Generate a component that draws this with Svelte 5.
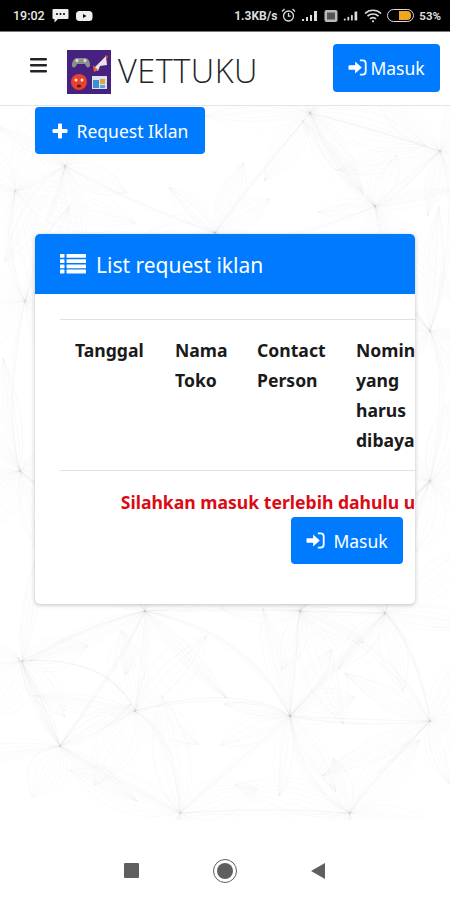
<script>
  // faint veined wallpaper behind the page: star-shaped hubs with bundles of thin spindles
  const hubs = [[15,190],[65,165],[215,232],[310,112],[375,205],[440,150],[25,300],[430,330],[20,470],[430,480],[22,660],[135,710],[60,745],[180,812],[290,715],[350,812],[385,612],[145,610],[300,610],[430,720]]
  let seed = 11
  const rnd = () => { seed = (seed * 16807) % 2147483647; return seed / 2147483647 }
  const veins = []
  for (const [hx, hy] of hubs) {
    const rays = 5 + Math.floor(rnd() * 3)
    const start = rnd() * 6.28
    for (let r = 0; r < rays; r++) {
      const ang = start + (r / rays) * 6.28 + (rnd() - .5) * .5
      const len = 55 + rnd() * 75
      const tx = hx + Math.cos(ang) * len, ty = hy + Math.sin(ang) * len
      const nx = -Math.sin(ang), ny = Math.cos(ang)
      const width = 12 + rnd() * 22
      for (let k = 0; k < 9; k++) {
        const b = ((k / 8) - .5) * 2 * width + (rnd() - .5) * 4
        const b2 = b * (.4 + rnd() * .5)
        veins.push(`M${hx} ${hy}C${hx + (tx - hx) * .35 + nx * b} ${hy + (ty - hy) * .35 + ny * b} ${hx + (tx - hx) * .7 + nx * b2} ${hy + (ty - hy) * .7 + ny * b2} ${tx} ${ty}`)
      }
    }
  }
  // longer arcs tying neighbouring hubs together
  for (let i = 0; i < hubs.length; i++) {
    for (let j = i + 1; j < hubs.length; j++) {
      const [ax, ay] = hubs[i], [bx, by] = hubs[j]
      if (Math.hypot(ax - bx, ay - by) > 190) continue
      const bend = (rnd() - .5) * 70
      for (let k = 0; k < 5; k++) {
        const mx = (ax + bx) / 2 + bend + (rnd() - .5) * 14, my = (ay + by) / 2 - bend + (rnd() - .5) * 14
        veins.push(`M${ax} ${ay}Q${mx} ${my} ${bx} ${by}`)
      }
    }
  }
  const cols = ['Tanggal', 'Nama Toko', 'Contact Person', 'Nominal yang harus dibayar', 'Status', 'Aksi']
</script>

{#snippet signIn()}
  <svg class="ic-in" viewBox="0 0 20 18" aria-hidden="true">
    <path d="M1.500 6.500h6V2.600l7 6.400-7 6.400v-3.900h-6a1 1 0 0 1-1-1V7.500a1 1 0 0 1 1-1z" fill="currentColor"/>
    <path d="M12.500 1.500h3a3.200 3.200 0 0 1 3.200 3.200v8.600a3.200 3.200 0 0 1-3.200 3.200h-3" fill="none" stroke="currentColor" stroke-width="1.900"/>
  </svg>
{/snippet}

<div class="phone">
  <div class="status">
    <div class="st-left">
      <span>19:02</span>
      <svg width="17" height="15" viewBox="0 0 17 15"><path d="M1.500 1h14a1 1 0 0 1 1 1v8a1 1 0 0 1-1 1H6l-3.500 3.500V11h-1a1 1 0 0 1-1-1V2a1 1 0 0 1 1-1z" fill="#eee"/><circle cx="5" cy="6" r="1" fill="#000"/><circle cx="8.500" cy="6" r="1" fill="#000"/><circle cx="12" cy="6" r="1" fill="#000"/></svg>
      <svg width="17" height="12" viewBox="0 0 17 12"><rect y="1" width="16.500" height="10" rx="3.500" fill="#eee"/><path d="M7 4l3.500 2L7 8z" fill="#000"/></svg>
    </div>
    <div class="st-right">
      <span class="speed">1.3KB/s</span>
      <svg width="15" height="15" viewBox="0 0 15 15" fill="none" stroke="#ddd" stroke-width="1.300"><circle cx="7.500" cy="8" r="5"/><path d="M7.500 5v3.200h2.200M1 3.500L3.500 1M14 3.500L11.500 1"/></svg>
      <svg width="18" height="12" viewBox="0 0 18 12" fill="#ddd"><rect x="1" y="9" width="2" height="2"/><rect x="5" y="7" width="2" height="4"/><rect x="9" y="5" width="2" height="6"/><rect x="13" y="1" width="3" height="10"/></svg>
      <svg width="14" height="14" viewBox="0 0 14 14"><rect x=".5" y="1" width="13" height="12" rx="2" fill="#bbb"/><rect x="3" y="3.500" width="8" height="7" fill="#555"/></svg>
      <svg width="16" height="12" viewBox="0 0 18 12" fill="#ddd"><rect x="1" y="9" width="2" height="2"/><rect x="5" y="7" width="2" height="4"/><rect x="9" y="5" width="2" height="6"/><rect x="13" y="1" width="3" height="10"/></svg>
      <svg class="wifi" width="18" height="14" viewBox="0 0 18 14" fill="none" stroke="#ddd" stroke-width="1.700"><path d="M1 4.500a11.500 11.500 0 0 1 16 0M3.500 7.200a8 8 0 0 1 11 0M6 9.800a4.200 4.200 0 0 1 6 0"/><circle cx="9" cy="12.300" r="1.100" fill="#ddd" stroke="none"/></svg>
      <span class="batt"><span class="fill"></span></span>
      <span>53%</span>
    </div>
  </div>

  <nav class="navbar">
    <svg class="burger" width="17" height="15" viewBox="0 0 17 15" fill="#212529"><rect width="17" height="2.600" y="0" rx="1"/><rect width="17" height="2.600" y="6" rx="1"/><rect width="17" height="2.600" y="12" rx="1"/></svg>
    <svg class="logo" width="44" height="44" viewBox="0 0 44 44">
      <rect width="44" height="44" fill="#46217f"/>
      <path d="M5 14c1-5 3-6 6-6h6c3 0 5 1 6 6 .5 3-2 5-4 2l-1-2h-8l-1 2c-2 3-4.500 1-4-2z" fill="#8d8f8c"/>
      <circle cx="10" cy="10.500" r="1.500" fill="#dfe3df"/><circle cx="18" cy="10.500" r="1.500" fill="#dfe3df"/>
      <path d="M27 18l12-12 1 9-7 1-2 5z" fill="#e9e4e2"/><path d="M26 15l5 5-4 2z" fill="#e8662d"/><path d="M38 5l3 1-1 3z" fill="#e34a33"/>
      <circle cx="12" cy="32" r="8" fill="#e8412f"/><circle cx="9" cy="30" r="1.500" fill="#fbe6de"/><circle cx="15" cy="30" r="1.500" fill="#fbe6de"/><ellipse cx="12" cy="36" rx="2.200" ry="1.600" fill="#6b1510"/>
      <rect x="25" y="26" width="15" height="13" fill="#d9e5ee"/><rect x="26" y="30" width="6" height="8" fill="#3d8fd1"/><rect x="33" y="29" width="5" height="5" fill="#e9a13b"/><rect x="33" y="35" width="5" height="3" fill="#5aa6dd"/>
    </svg>
    <span class="brand">VETTUKU</span>
    <button class="btn nav-btn">{@render signIn()}<span>Masuk</span></button>
  </nav>

  <main class="page">
    <svg class="wallpaper" width="450" height="715" viewBox="0 105 450 715" aria-hidden="true">
      {#each veins as d}<path {d}/>{/each}
    </svg>

    <button class="btn req-btn">
      <svg width="16" height="16" viewBox="0 0 16 16" fill="currentColor"><path d="M6 1.500a1 1 0 0 1 1-1h2a1 1 0 0 1 1 1V6h4.500a1 1 0 0 1 1 1v2a1 1 0 0 1-1 1H10v4.500a1 1 0 0 1-1 1H7a1 1 0 0 1-1-1V10H1.500a1 1 0 0 1-1-1V7a1 1 0 0 1 1-1H6z"/></svg>
      <span>Request Iklan</span>
    </button>

    <section class="card">
      <header class="card-head">
        <svg width="26" height="20" viewBox="0 0 26 20" fill="currentColor">
          {#each [0, 5.200, 10.400, 15.600] as y}
            <rect x="0" {y} width="4.500" height="3.800" rx=".6"/>
            <rect x="6.500" {y} width="19.500" height="3.800" rx=".6"/>
          {/each}
        </svg>
        <span class="head-title">List request iklan</span>
      </header>
      <div class="card-body">
        <div class="scroller">
          <table>
            <colgroup><col style="width:100px"><col style="width:82px"><col style="width:99px"><col style="width:105px"><col style="width:94px"><col style="width:94px"></colgroup>
            <thead>
              <tr>{#each cols as c}<th>{c}</th>{/each}</tr>
            </thead>
            <tbody>
              <tr>
                <td colspan="6">
                  <div class="warn">Silahkan masuk terlebih dahulu untuk melihat data</div>
                  <button class="btn body-btn">{@render signIn()}<span>Masuk</span></button>
                </td>
              </tr>
            </tbody>
          </table>
        </div>
      </div>
    </section>
  </main>

  <footer class="softkeys">
    <span class="key-square"></span>
    <span class="key-home"><span></span></span>
    <svg width="16" height="18" viewBox="0 0 16 18"><path d="M15 1v16L1 9z" fill="#5f5f5f"/></svg>
  </footer>
</div>

<style>
  :global(body) { margin: 0; background: #fff; }
  .phone {
    width: 450px; height: 900px; display: flex; flex-direction: column; overflow: hidden;
    font-family: "Noto Sans", "Open Sans", sans-serif; color: #212529; background: #fff;
  }
  .status {
    height: 31px; background: #000; color: #e8e8e8; flex-shrink: 0;
    display: flex; align-items: center; justify-content: space-between;
    padding: 0 9px 0 13px; font: 500 12.500px Roboto, sans-serif;
    border-bottom: 1px solid #777;
  }
  .st-left, .st-right { display: flex; align-items: center; }
  .st-left { gap: 7px; }
  .st-right { gap: 5px; font-weight: 700; font-size: 11.500px; color: #ddd; }
  .speed { margin-right: -1px; font-size: 12px; }
  .batt {
    width: 27px; height: 13px; border: 1px solid #ddd; border-radius: 7px;
    display: flex; justify-content: flex-end; align-items: center; padding: 1px 2px; box-sizing: border-box;
  }
  .fill { width: 12px; height: 9px; background: #f0a623; border-radius: 0 4px 4px 0; }

  .navbar {
    height: 73px; flex-shrink: 0; background: #fff; border-bottom: 1px solid #e4e4e4;
    display: flex; align-items: center; padding: 0 10px 0 30px;
  }
  .burger { margin-right: 20px; margin-top: -6px; }
  .logo { flex-shrink: 0; margin-right: 7px; margin-top: 6px; }
  .brand { font: 300 32.500px/1 "Open Sans", sans-serif; letter-spacing: .5px; color: #212529; margin-top: 6px; }
  .btn {
    background: #007bff; color: #fff; border: none; border-radius: 4px;
    display: inline-flex; align-items: center; justify-content: center;
    font-family: "Noto Sans", sans-serif; font-size: 17.500px; padding: 0; cursor: pointer;
  }
  .ic-in { width: 19px; height: 17px; }
  .nav-btn { margin-left: auto; width: 107px; height: 48px; gap: 3px; margin-top: -2px; }
  .page { flex: 1; position: relative; padding: 1px 0 0 35px; overflow: hidden; }
  .wallpaper {
    position: absolute; left: 0; top: 0; fill: none; stroke: #000; stroke-width: 1.300; stroke-opacity: .014;
    filter: blur(.5px);
  }
  .req-btn { position: relative; width: 170px; height: 47px; gap: 9px; display: flex; }
  .card {
    position: relative; width: 380px; margin-top: 80px; background: #fff; border-radius: 5px;
    box-shadow: 0 1px 4px rgba(0,0,0,.25); overflow: hidden;
  }
  .card-head {
    height: 60px; background: #007bff; color: #fff; display: flex; align-items: center;
    padding-left: 25px; gap: 10px; font-size: 21px;
  }
  .head-title { margin-top: 2px; }
  .card-body { padding: 25px 0 40px 25px; }
  .scroller { overflow: hidden; }
  table { width: 574px; table-layout: fixed; border-collapse: collapse; font-size: 17.600px; line-height: 30px; }
  th {
    text-align: left; vertical-align: top; padding: 15px 0 15px 15px; font-weight: 700;
    border-top: 1px solid #dee2e6; border-bottom: 1px solid #dee2e6; color: #1a1a1a;
  }
  td { padding: 15px 0 0; text-align: center; }
  .warn { color: #dc0a14; font-weight: 700; white-space: nowrap; line-height: 32px; height: 31px; }
  .body-btn { width: 112px; height: 47px; gap: 8px; display: inline-flex; vertical-align: top; }

  .softkeys {
    height: 80px; flex-shrink: 0; background: #fff; display: flex; align-items: center; justify-content: center;
    padding-top: 21px; box-sizing: border-box;
  }
  .softkeys > * { flex-shrink: 0; }
  .key-square { width: 15px; height: 15px; background: #5f5f5f; border-radius: 1px; margin-right: 74px; }
  .key-home {
    width: 22px; height: 22px; border: 1px solid #5f5f5f; border-radius: 50%; display: flex;
    align-items: center; justify-content: center; margin-right: 73px;
  }
  .key-home span { width: 16px; height: 16px; border-radius: 50%; background: #5f5f5f; }
</style>
